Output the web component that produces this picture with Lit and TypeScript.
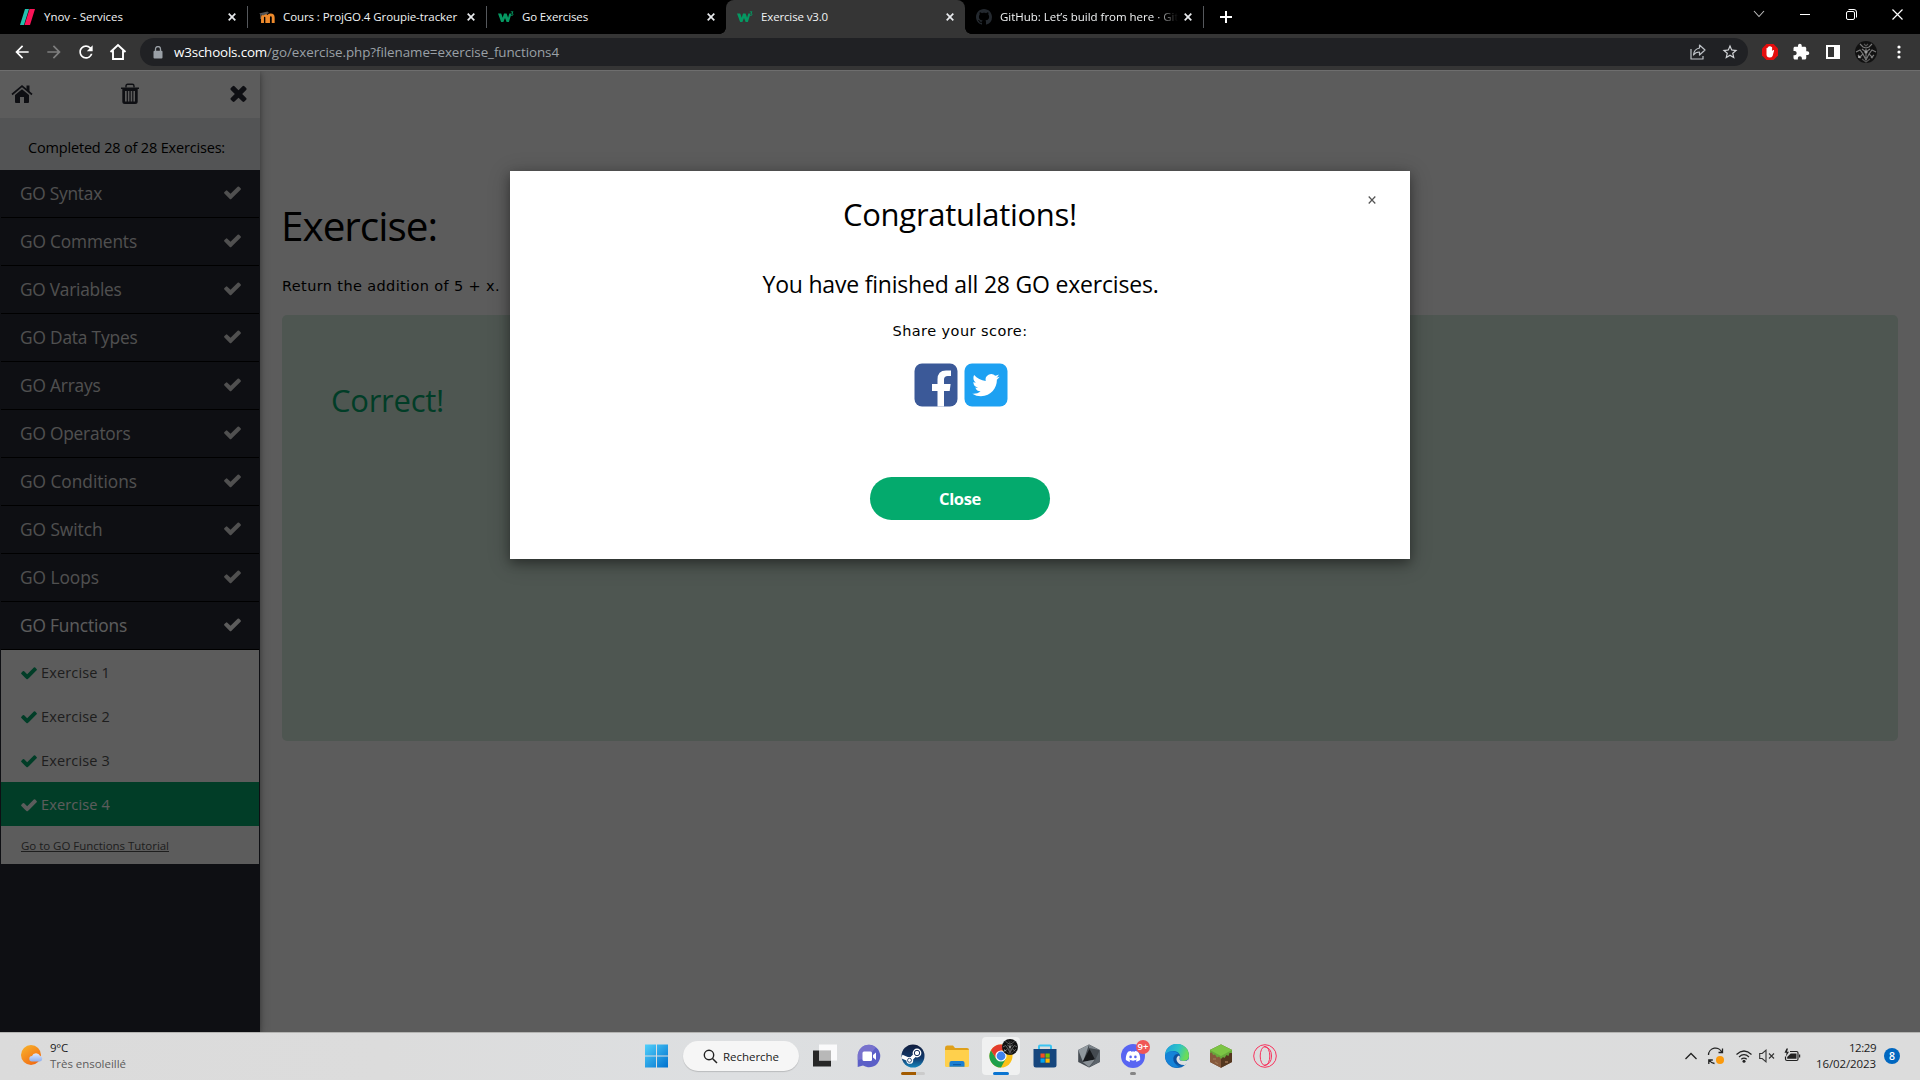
import { LitElement, html, svg, css } from "lit";
import { customElement, property } from "lit/decorators.js";

/** One line of text tracked so that it fills the given width in pixels. */
@customElement("fit-text")
class FitText extends LitElement {
  @property() text = "";
  @property({ type: Number }) w = 0;
  static styles = css`
    :host { display: inline-block; white-space: pre; }
    .line { display: inline-block; text-decoration: inherit; }
  `;
  render() {
    return html`<span class="line">${this.text}</span>`;
  }
  updated() {
    const line = this.renderRoot.querySelector(".line") as HTMLElement;
    if (!this.w || !line) return;
    line.style.letterSpacing = "0px";
    const natural = line.getBoundingClientRect().width;
    line.style.letterSpacing = `${(this.w - natural) / this.text.length}px`;
  }
}

const t = (text: string, w: number) => html`<fit-text .text=${text} .w=${w}></fit-text>`;

const CHECK = svg`<path fill="currentColor" d="M1671 566q0 40-28 68l-724 724-136 136q-28 28-68 28t-68-28l-136-136-362-362q-28-28-28-68t28-68l136-136q28-28 68-28t68 28l294 295 656-657q28-28 68-28t68 28l136 136q28 28 28 68z"/>`;
const check = (size: number) => html`<svg class="ic" width=${size} height=${size} viewBox="110 110 1572 1572">${CHECK}</svg>`;
const w3 = html`<svg class="ic" width="17" height="16" viewBox="0 0 17 16"><path d="M0 4.500h3.200l1.500 4.300 1.300-4.300h2.600l1.500 4.300 1.200-4.300h2.200l-2.600 8.500H8.600L7 9l-1.600 4H3.100z" fill="#059862"/><path d="M12.800 2.800h2.300l-1.300 1.500q1.600.2 1.200 1.500-.6 1-2.200.4" fill="none" stroke="#059862" stroke-width=".9"/></svg>`;
const closeX = html`<svg class="ic" width="8" height="8" viewBox="0 0 8 8"><path d="M.7.7 7.3 7.3M7.3.7.7 7.3" stroke="#e8eaed" stroke-width="1.700"/></svg>`;
const avatar = (s: number) => html`<svg class="ic" width=${s} height=${s} viewBox="0 0 22 22">
  <circle cx="11" cy="11" r="11" fill="#111"/>
  <g fill="none" stroke="#7c7c7c" stroke-width="1.100"><path d="M5 3l3 3 3 1 3-1 3-3M7 8l4 3 4-3M1 11l4-2 3 4-4 4M21 11l-4-2-3 4 4 4M11 8v9M8 13l3 6 3-6M3 14l3 3M19 14l-3 3"/><path d="M9 3l2 2 2-2M7 18l4 3 4-3" stroke="#555"/></g>
  <circle cx="11" cy="11" r="1.600" fill="#999"/><circle cx="4" cy="16" r="1" fill="#bbb"/></svg>`;

@customElement("browser-tabs")
class BrowserTabs extends LitElement {
  static styles = css`
    :host { display: flex; height: 34px; background: #000; padding-left: 9px; font-family: "Open Sans", sans-serif; font-size: 11.500px; color: #f1f3f4; }
    .ic { display: block; flex: none; }
    .tab { box-sizing: border-box; width: 239px; height: 34px; display: flex; align-items: center; padding: 0 11px 0 11px; position: relative; }
    .tab.line { border-right: 1px solid transparent; border-image: linear-gradient(#000 7px, #55585c 7px, #55585c 27px, #000 27px) 1; }
    .tab.active { background: #353535; border-radius: 8px 8px 0 0; }
    .tab.active::before, .tab.active::after { content: ""; position: absolute; bottom: 0; width: 6px; height: 6px; }
    .tab.active::before { left: -6px; background: radial-gradient(circle at 0 0, transparent 5.500px, #353535 6px); }
    .tab.active::after { right: -6px; background: radial-gradient(circle at 100% 0, transparent 5.500px, #353535 6px); }
    .fav { width: 16px; margin-right: 8px; flex: none; }
    .fade { -webkit-mask-image: linear-gradient(90deg, #000 155px, transparent 178px); overflow: hidden; width: 178px; }
    .label { flex: 1; min-width: 0; line-height: 18px; padding-bottom: 1px; white-space: nowrap; }
    .plus { align-self: center; margin-left: 16px; }
    .win { margin-left: auto; display: flex; height: 28px; align-items: center; }
    .win span { width: 46px; display: flex; justify-content: center; }
  `;
  render() {
    const tab = (icon: unknown, text: unknown, cls = "") =>
      html`<div class="tab ${cls}"><span class="fav">${icon}</span><span class="label">${text}</span>${closeX}</div>`;
    return html`
      ${tab(html`<svg class="ic" width="16" height="16" viewBox="0 0 16 16"><path d="M5 0h4L4 16H0z" fill="#22c0ae"/><path d="M9.500 0h5.500L10 16H4.500z" fill="#fa1458"/></svg>`, t("Ynov - Services", 79), "line")}
      ${tab(html`<svg class="ic" width="17" height="16" viewBox="0 0 17 16"><path d="M3.500 14V8.500q0-2.300 2.100-2.300 2.200 0 2.200 2.300V14M9.500 14V8.500q0-2.600 2.200-2.600 2.500 0 2.500 2.600V14" fill="none" stroke="#ee8a2c" stroke-width="2.900"/><path d="M0 4.500 8.500 2.500 10 4 4 6.500z" fill="#555"/><path d="M1.500 5v5" stroke="#555" stroke-width=".8"/></svg>`, t("Cours : ProjGO.4 Groupie-tracker", 174), "line")}
      ${tab(w3, t("Go Exercises", 66))}
      ${tab(w3, t("Exercise v3.0", 67), "active")}
      ${tab(html`<svg class="ic" width="16" height="16" viewBox="0 0 16 16"><path fill="#24292f" d="M8 0C3.580 0 0 3.580 0 8c0 3.540 2.290 6.530 5.470 7.590.4.070.550-.170.550-.380 0-.190-.010-.820-.010-1.490-2.010.370-2.530-.490-2.690-.940-.090-.230-.480-.940-.820-1.130-.280-.150-.680-.520-.010-.530.630-.010 1.080.580 1.230.820.720 1.210 1.870.870 2.330.660.070-.520.280-.870.510-1.070-1.780-.2-3.640-.890-3.640-3.950 0-.870.310-1.590.820-2.150-.080-.2-.360-1.020.080-2.120 0 0 .670-.210 2.200.820.640-.180 1.320-.270 2-.270s1.360.090 2 .270c1.530-1.040 2.200-.820 2.200-.820.440 1.100.160 1.920.080 2.120.510.560.820 1.270.820 2.150 0 3.070-1.870 3.750-3.650 3.950.290.250.540.730.540 1.480 0 1.070-.010 1.930-.010 2.200 0 .210.150.460.550.380A8.010 8.010 0 0016 8c0-4.420-3.580-8-8-8z"/></svg>`, html`<div class="fade">${t("GitHub: Let’s build from here · GitHub", 201)}</div>`, "line")}
      <svg class="ic plus" width="12" height="12" viewBox="0 0 12 12"><path d="M6 0v12M0 6h12" stroke="#fff" stroke-width="2"/></svg>
      <div class="win">
        <span><svg class="ic" width="12" height="8" viewBox="0 0 12 8"><path d="M1 1l5 5.500L11 1" fill="none" stroke="#bbb" stroke-width="1.100"/></svg></span>
        <span><svg class="ic" width="10" height="10" viewBox="0 0 10 10"><path d="M0 5.500h10" stroke="#fff"/></svg></span>
        <span><svg class="ic" width="11" height="11" viewBox="0 0 11 11"><rect x=".5" y="2.500" width="8" height="8" rx="1.500" fill="none" stroke="#fff"/><path d="M2.500.500H8q2.500 0 2.500 2.500v5.500" fill="none" stroke="#fff"/></svg></span>
        <span><svg class="ic" width="11" height="11" viewBox="0 0 11 11"><path d="M.5.500l10 10M10.500.500l-10 10" stroke="#fff" stroke-width="1.200"/></svg></span>
      </div>`;
  }
}

@customElement("browser-toolbar")
class BrowserToolbar extends LitElement {
  static styles = css`
    :host { box-sizing: border-box; display: flex; align-items: center; height: 36px; background: #353535; padding: 0 11px 0 12px; font-family: "Open Sans", sans-serif; }
    .ic { display: block; flex: none; }
    .nav { display: flex; gap: 12px; width: 128px; flex: none; }
    .url { flex: 1; height: 28px; border-radius: 14px; background: #202124; display: flex; align-items: center; padding: 0 9px 0 13px; font-size: 13.400px; line-height: 20px; color: #9aa0a6; }
    .url .host { color: #fff; margin-left: 11px; }
    .url .acts { margin-left: auto; display: flex; gap: 14px; }
    .ext { display: flex; align-items: center; gap: 12px; margin-left: 12px; }
    .panel { margin-left: 1px; }
  `;
  render() {
    const m = (d: string, fill = "#fff", s = 20) => html`<svg class="ic" width=${s} height=${s} viewBox="0 0 24 24"><path d=${d} fill=${fill} /></svg>`;
    const back = "M20 11H7.830l5.590-5.590L12 4l-8 8 8 8 1.410-1.410L7.830 13H20v-2z";
    return html`
      <div class="nav">
        ${m(back)}
        <svg class="ic" width="20" height="20" viewBox="0 0 24 24"><g transform="rotate(180 12 12)"><path d=${back} fill="#7e7e7e"/></g></svg>
        ${m("M17.650 6.350A7.958 7.958 0 0012 4c-4.420 0-7.990 3.580-7.990 8s3.570 8 7.990 8c3.730 0 6.840-2.550 7.730-6h-2.080A5.990 5.990 0 0112 18c-3.310 0-6-2.690-6-6s2.690-6 6-6c1.660 0 3.140.690 4.220 1.780L13 11h7V4l-2.350 2.350z")}
        <svg class="ic" width="20" height="20" viewBox="0 0 20 20"><path d="M2.500 10 10 3l7.500 7M5 8.500V17h10V8.500" fill="none" stroke="#fff" stroke-width="1.900"/></svg>
      </div>
      <div class="url">
        <svg class="ic" width="10" height="13" viewBox="0 0 10 13"><path d="M2.500 5V3a2.500 2.500 0 015 0v2" fill="none" stroke="#9aa0a6" stroke-width="1.300"/><rect x=".5" y="4.700" width="9" height="7.800" rx="1" fill="#9aa0a6"/></svg>
        <span class="host">${t("w3schools.com", 93)}</span>${t("/go/exercise.php?filename=exercise_functions4", 292)}
        <div class="acts">
          <svg class="ic" width="18" height="18" viewBox="0 0 18 18"><path d="M2 6v10h12v-3M10.500 5V2l5.500 5-5.500 5V9q-4 0-6 3 .5-6 6-7z" fill="none" stroke="#bdc1c6" stroke-width="1.200" stroke-linejoin="round"/></svg>
          ${m("M22 9.240l-7.190-.620L12 2 9.190 8.630 2 9.240l5.460 4.730L5.820 21 12 17.270 18.180 21l-1.630-7.030L22 9.240zM12 15.400l-3.760 2.270 1-4.280-3.320-2.880 4.380-.380L12 6.100l1.710 4.040 4.380.380-3.320 2.880 1 4.280L12 15.400z", "#d2d4d7", 18)}
        </div>
      </div>
      <div class="ext">
        <svg class="ic" width="20" height="20" viewBox="0 0 20 20"><path d="M6.500 2h7L18 6.500v7L13.500 18h-7L2 13.500v-7z" fill="#e40d0d"/><path d="M6.500 10.500V6.200q.7-.8 1.300 0V5q.7-.9 1.400 0V4.300q.8-.8 1.500 0V5q.8-.7 1.400.2V9l1-1q1-.3 1 .6L12.600 14q-.8 1.600-3 1.600-3 0-3.100-3z" fill="#fff"/></svg>
        ${m("M20.500 11H19V7c0-1.100-.9-2-2-2h-4V3.500C13 2.120 11.880 1 10.500 1S8 2.120 8 3.500V5H4c-1.100 0-1.990.9-1.990 2v3.800H3.500c1.490 0 2.700 1.210 2.700 2.700s-1.210 2.700-2.700 2.700H2V20c0 1.100.9 2 2 2h3.800v-1.500c0-1.490 1.210-2.700 2.700-2.700 1.490 0 2.700 1.210 2.700 2.700V22H17c1.100 0 2-.9 2-2v-4h1.500c1.380 0 2.500-1.120 2.500-2.500S21.880 11 20.500 11z", "#fff", 18)}
        <svg class="ic panel" width="20" height="16" viewBox="0 0 20 16"><path fill="#fff" fill-rule="evenodd" d="M3 1h14v14H3zM5 3v10h6V3z"/></svg>
        ${avatar(22)}
        <svg class="ic" width="20" height="16" viewBox="0 0 20 16"><g fill="#fff"><circle cx="10" cy="3" r="1.600"/><circle cx="10" cy="8" r="1.600"/><circle cx="10" cy="13" r="1.600"/></g></svg>
      </div>`;
  }
}

@customElement("exercise-menu")
class ExerciseMenu extends LitElement {
  static styles = css`
    :host { display: flex; flex-direction: column; width: 260px; flex: none; background: #282a35; font-family: "Open Sans", sans-serif; box-shadow: 0 2px 5px rgba(0,0,0,.3), 0 2px 12px rgba(0,0,0,.24); }
    .ic { display: block; flex: none; }
    .bar { height: 47px; box-sizing: border-box; background: #fff; display: flex; justify-content: space-between; align-items: center; padding: 0 13px 2px 11px; }
    .bar .bin { margin-right: 3px; }
    .done { height: 52px; box-sizing: border-box; padding: 18px 0 0 28px; background: #e7e9eb; font-size: 14.500px; line-height: 24px; color: #000; }
    .topic { height: 47px; margin: 0 1px; padding: 0 18px 0 19px; border-bottom: 1px solid #000; display: flex; justify-content: space-between; align-items: center; font-size: 17.300px; line-height: 24px; color: #ddd; }
    .topic .ic { margin-top: -2px; }
    .topic.open { color: #fff; }
    .sub { box-sizing: border-box; height: 44px; margin: 0 1px; padding: 1px 0 0 20px; background: #fff; display: flex; align-items: center; gap: 4px; font-size: 14.500px; line-height: 22px; color: #555; }
    .sub .ic { color: #04aa6d; }
    .sub.now { background: #04aa6d; color: #fff; }
    .sub.now .ic { color: #fff; }
    .link { box-sizing: border-box; height: 38px; margin: 0 1px; padding: 1px 0 0 20px; background: #fff; display: flex; align-items: center; font-size: 11.500px; line-height: 18px; color: #555; }
    .link fit-text { text-decoration: underline; }
  `;
  render() {
    const topics: [string, number][] = [["GO Syntax", 82], ["GO Comments", 117], ["GO Variables", 101.5], ["GO Data Types", 117.5], ["GO Arrays", 80.5], ["GO Operators", 110.5], ["GO Conditions", 117], ["GO Switch", 82.5], ["GO Loops", 79], ["GO Functions", 107]];
    return html`
      <div class="bar">
        <svg class="ic" width="22" height="20" viewBox="0 0 22 20"><path d="M11 5.200 18 11v7q0 1-1 1h-4v-6H9v6H5q-1 0-1-1v-7z" fill="#282a35"/><path d="M1 10.500 11 2l10 8.500" fill="none" stroke="#282a35" stroke-width="1.700"/><path d="M15.500 1.500h3V8l-3-2.500z" fill="#282a35"/></svg>
        <svg class="ic bin" width="20" height="22" viewBox="0 0 20 22"><path d="M6 4.500V3q0-1.700 1.700-1.700h4.600Q14 1.300 14 3v1.500" fill="none" stroke="#282a35" stroke-width="1.400"/><path d="M1 4.500h18V6H1z" fill="#282a35"/><path fill="#282a35" fill-rule="evenodd" d="M2.300 6h15.400v12.500q0 2.500-2.500 2.500H4.800q-2.500 0-2.500-2.500zM5 8v10.500h1.700V8zm2.900 0v10.500h1.500V8zm2.800 0v10.500h1.500V8zm2.700 0v10.500H15V8z"/></svg>
        <svg class="ic" width="17" height="17" viewBox="300 302 1190 1252"><path fill="#282a35" d="M1490 1322q0 40-28 68l-136 136q-28 28-68 28t-68-28l-294-294-294 294q-28 28-68 28t-68-28l-136-136q-28-28-28-68t28-68l294-294-294-294q-28-28-28-68t28-68l136-136q28-28 68-28t68 28l294 294 294-294q28-28 68-28t68 28l136 136q28 28 28 68t-28 68l-294 294 294 294q28 28 28 68z"/></svg>
      </div>
      <div class="done">${t("Completed 28 of 28 Exercises:", 197)}</div>
      ${topics.map(([n, w], i) => html`<div class="topic ${i === 9 ? "open" : ""}">${t(n, w)}${check(17)}</div>`)}
      ${[1, 2, 3, 4].map((n) => html`<div class="sub ${n === 4 ? "now" : ""}">${check(16)}${t(`Exercise ${n}`, 69)}</div>`)}
      <div class="link">${t("Go to GO Functions Tutorial", 148)}</div>`;
  }
}

@customElement("score-dialog")
class ScoreDialog extends LitElement {
  static styles = css`
    :host { position: absolute; inset: 0; display: flex; justify-content: center; align-items: flex-start; padding-top: 100px; background: rgba(0,0,0,.64); font-family: "Open Sans", sans-serif; color: #000; }
    .ic { display: block; }
    .card { box-sizing: border-box; width: 900px; height: 388px; background: #fff; display: flex; flex-direction: column; align-items: center; position: relative; box-shadow: 0 4px 10px rgba(0,0,0,.3), 0 4px 20px rgba(0,0,0,.28); }
    .x { position: absolute; top: 25px; right: 34px; }
    .title { margin-top: 19px; height: 48px; line-height: 48px; font-size: 31px; }
    .msg { margin-top: 29px; height: 34px; line-height: 34px; font-size: 23px; padding-left: 1px; }
    .share { margin-top: 18px; height: 24px; font: 14.500px/24px "DejaVu Sans", sans-serif; }
    .icons { margin-top: 20px; margin-left: 1px; display: flex; gap: 6px; }
    .btn { margin-top: 70px; width: 180px; height: 43px; border-radius: 22px; background: #04aa6d; color: #fff; display: flex; justify-content: center; align-items: center; font-size: 16.500px; font-weight: 700; line-height: 24px; }
  `;
  render() {
    return html`<div class="card">
      <svg class="ic x" width="8" height="8" viewBox="0 0 8 8"><path d="M.7.500 7.300 7.500M7.300.500.700 7.500" stroke="#555" stroke-width="1.200"/></svg>
      <div class="title">${t("Congratulations!", 234)}</div>
      <div class="msg">${t("You have finished all 28 GO exercises.", 396)}</div>
      <div class="share">${t("Share your score:", 135)}</div>
      <div class="icons">
        <svg class="ic" width="44" height="44" viewBox="0 0 44 44"><rect x=".5" y=".5" width="43" height="43" rx="7.500" fill="#3b5998"/><path d="M23.500 43.500V28H18v-7h5.500v-4.500q0-9 8.500-9h5V13h-3.200q-3.800 0-3.800 3.600V21h6.600l-.9 7H30v15.500z" fill="#fff"/></svg>
        <svg class="ic" width="44" height="44" viewBox="0 0 44 44"><rect x=".5" y=".5" width="43" height="43" rx="7.500" fill="#1da1f2"/><g transform="translate(8.300 8.500) scale(1.140)"><path fill="#fff" d="M23.953 4.570a10 10 0 01-2.825.775 4.958 4.958 0 002.163-2.723c-.951.555-2.005.959-3.127 1.184a4.920 4.920 0 00-8.384 4.482C7.690 8.095 4.067 6.130 1.640 3.162a4.822 4.822 0 00-.666 2.475c0 1.710.870 3.213 2.188 4.096a4.904 4.904 0 01-2.228-.616v.060a4.923 4.923 0 003.946 4.827 4.996 4.996 0 01-2.212.085 4.936 4.936 0 004.604 3.417 9.867 9.867 0 01-6.102 2.105c-.390 0-.779-.023-1.170-.067a13.995 13.995 0 007.557 2.209c9.053 0 13.998-7.496 13.998-13.985 0-.210 0-.420-.015-.630A9.935 9.935 0 0024 4.590z"/></g></svg>
      </div>
      <div class="btn">${t("Close", 42)}</div>
    </div>`;
  }
}

@customElement("task-bar")
class TaskBar extends LitElement {
  static styles = css`
    :host { box-sizing: border-box; display: grid; grid-template-columns: 645px 1fr 300px; height: 48px; background: linear-gradient(90deg, #dbdbdb, #dcdcdc 20%, #dddfe1 38%, #dcddde 60%, #dcdcdc); border-top: 1px solid #b4b4b2; padding-bottom: 1px; font-family: "Open Sans", sans-serif; font-size: 11.500px; color: #1b1b1b; }
    .ic { display: block; flex: none; }
    .weather { display: flex; align-items: center; padding-left: 20px; gap: 6px; }
    .two { display: flex; flex-direction: column; line-height: 16px; }
    .weather .two { padding-bottom: 1px; }
    .weather .ic { margin-top: -2px; }
    .dim { color: #5c5c5c; }
    .apps { display: flex; align-items: center; }
    .search { box-sizing: border-box; margin: 0 14px 0 14px; width: 116px; height: 30px; border-radius: 15px; background: #f6f6f6; box-shadow: 0 1px 1px rgba(0,0,0,.16); display: flex; align-items: center; padding-left: 20px; gap: 5px; }
    .app { width: 24px; height: 38px; margin-right: 20px; display: flex; align-items: center; justify-content: center; position: relative; flex: none; }
    .hot { width: 38px; margin: 0 13px 0 -7px; background: #f0f1f1; border-radius: 4px; }
    .mark { position: absolute; bottom: 0; left: 50%; height: 3px; border-radius: 2px; transform: translateX(-50%); }
    .blue { width: 16px; background: #0a74d1; }
    .grey { width: 6px; background: #858585; }
    .steam { width: 24px; background: linear-gradient(90deg, #a35b00 62%, #cbcbcb 62%); }
    .pic { position: absolute; top: 2px; right: 2px; }
    .badge { position: absolute; top: 3px; right: -5px; width: 14px; height: 14px; border-radius: 50%; background: #f05656; color: #fff; font-size: 9.500px; font-weight: 600; line-height: 13px; text-align: center; }
    .tray { display: flex; align-items: center; justify-content: flex-end; padding-right: 20px; }
    .tray .two { align-items: flex-end; margin-right: 8px; }
    .count { width: 16px; height: 16px; border-radius: 50%; background: #0067c0; color: #fff; font-size: 10.500px; font-weight: 600; line-height: 16px; text-align: center; }
    .g6 { margin-right: 6px; }
    .g8 { margin-right: 8px; }
    .g10 { margin-right: 10px; }
    .g15 { margin-right: 15px; }
  `;
  render() {
    const app = (pic: unknown, extra: unknown = "", cls = "") => html`<div class="app ${cls}"><svg class="ic" width="24" height="24" viewBox="0 0 24 24">${pic}</svg>${extra}</div>`;
    return html`
      <div class="weather">
        <svg class="ic" width="24" height="24" viewBox="0 0 24 24"><defs><linearGradient id="sun" x1="0" y1="0" x2=".7" y2="1"><stop offset="0" stop-color="#f8b62c"/><stop offset="1" stop-color="#f26a12"/></linearGradient><linearGradient id="cl" x1="0" y1="0" x2="0" y2="1"><stop offset="0" stop-color="#dfe9fb"/><stop offset="1" stop-color="#8fb0ee"/></linearGradient></defs><circle cx="11" cy="12" r="10" fill="url(#sun)"/><path d="M12 18.500a2.700 2.700 0 010-5.400 4.300 4.300 0 018-.3 2.900 2.900 0 01-.2 5.700z" fill="url(#cl)"/></svg>
        <div class="two">${t("9°C", 18)}<span class="dim">${t("Très ensoleillé", 76)}</span></div>
      </div>
      <div class="apps">
        <svg class="ic" width="24" height="24" viewBox="0 0 24 24"><defs><linearGradient id="win" x1="0" y1="0" x2="1" y2="1"><stop offset="0" stop-color="#50d0fb"/><stop offset="1" stop-color="#0070ce"/></linearGradient></defs><path d="M0 .500h11v11H0zM12 .500h11v11H12zM0 12.500h11v11H0zM12 12.500h11v11H12z" fill="url(#win)"/></svg>
        <div class="search"><svg class="ic" width="15" height="15" viewBox="0 0 15 15"><circle cx="6" cy="6" r="4.700" fill="none" stroke="#222" stroke-width="1.400"/><path d="M9.500 9.500 14 14" stroke="#222" stroke-width="1.500"/></svg>${t("Recherche", 56)}</div>
        ${app(svg`<path d="M0 6.500h18v16H0z" fill="#272727"/><path d="M6 .500h18v16H6z" fill="#fff" opacity=".85"/><path d="M6 6.500h12v10H6z" fill="#b8b8b8"/>`)}
        ${app(svg`<path d="M12 .700a11.300 11.300 0 11-6 20.900L.700 23V12A11.300 11.300 0 0112 .700z" fill="#5b5fc7"/><path d="M12 .700A11.300 11.300 0 00.700 12v4Q10 16 19 3.200 16 .700 12 .700z" fill="#8278cf" opacity=".75"/><rect x="5.500" y="7.500" width="9.500" height="9.500" rx="1.500" fill="#fff"/><path d="M16 11l3-2.500v7.500l-3-2.500z" fill="#fff"/>`)}
        ${app(svg`<defs><linearGradient id="st" x1="0" y1="0" x2="0" y2="1"><stop offset="0" stop-color="#101c3c"/><stop offset=".6" stop-color="#123a6d"/><stop offset="1" stop-color="#1686bd"/></linearGradient></defs><circle cx="12" cy="12" r="11.500" fill="url(#st)"/><path d="M.800 12.500 9 16l7-7" fill="none" stroke="#fff" stroke-width="3.600"/><circle cx="16" cy="9" r="4.400" fill="#fff"/><circle cx="16" cy="9" r="2.700" fill="none" stroke="#17305c" stroke-width="1"/><circle cx="8.800" cy="16.400" r="3.400" fill="#fff"/><circle cx="8.500" cy="16.300" r="2" fill="none" stroke="#17305c" stroke-width=".8"/>`, html`<span class="mark steam"></span>`)}
        ${app(svg`<path d="M0 4q0-2.500 2-2.500h6L10 4h12q2 0 2 2v5H0z" fill="#dfa01a"/><path d="M0 6h24v15.500q0 1.500-1.500 1.500h-21Q0 23 0 21.500z" fill="#ffd04c"/><path d="M4.500 22.800V19q0-2 2-2h11q2 0 2 2v3.800z" fill="#1b7fd2"/><path d="M8 20h8v1.200H8z" fill="#0b5ca6"/>`)}
        ${app(svg`<circle cx="12" cy="12" r="11.500" fill="#fbc116"/><path d="M2 6.200A11.500 11.500 0 0012 23.500L16.800 14.800 12 12 7.200 14.800z" fill="#1fa04b"/><path d="M2 6.200 7.200 14.800 12 8V6.500L22 6.500A11.500 11.500 0 002 6.200z" fill="#e33b2e"/><circle cx="12" cy="12" r="5.600" fill="#fff"/><circle cx="12" cy="12" r="4.400" fill="#4083ee"/>`, html`<span class="pic">${avatar(16)}</span><span class="mark blue"></span>`, "hot")}
        ${app(svg`<path d="M6 5.500V2.500q0-1 1-1h10q1 0 1 1v3" fill="none" stroke="#3cc4f2" stroke-width="2"/><path d="M.500 5h23v16q0 2.500-2.500 2.500H3Q.500 23.500.500 21z" fill="#16467d"/><path d="M7.500 9.500h4.200v4.200H7.500z" fill="#f25022"/><path d="M12.500 9.500h4.200v4.200h-4.200z" fill="#7fba00"/><path d="M7.500 14.500h4.200v4.200H7.500z" fill="#00a4ef"/><path d="M12.500 14.500h4.200v4.200h-4.200z" fill="#ffb900"/>`)}
        ${app(svg`<path d="M12 .500 22.800 6v12L12 23.500 1.200 18V6z" fill="#444a50"/><path d="M12 .500 22.800 6 12 4z" fill="#7a8289"/><path d="M12 .500 1.200 6 6 18z" fill="#90989e"/><path d="M22.800 6v12L12 23.500l6-7z" fill="#5c646b"/><path d="M12.500 5 18 15.500 5.500 18z" fill="#17191c"/><path d="M5.500 18 18 15.500 12 23z" fill="#888f95"/>`)}
        ${app(svg`<circle cx="12" cy="12" r="12" fill="#5865f2"/><g transform="translate(4.800 5.200) scale(.6)"><path fill="#fff" d="M20.317 4.370a19.790 19.790 0 00-4.885-1.515c-.240.400-.520.900-.690 1.290-1.840-.280-3.680-.280-5.490 0-.160-.390-.410-.900-.690-1.290a19.740 19.740 0 00-4.890 1.520C.530 9.050-.320 13.580.100 18.060c2.060 1.510 4.040 2.430 6.020 3.080.510-.650.920-1.320 1.310-2.020-.650-.250-1.310-.600-1.910-.950l.450-.400c3.930 1.790 8.180 1.790 12.060 0l.460.380c-.590.350-1.220.650-1.880.900.360.700.770 1.360 1.260 2.040 1.960-.610 3.950-1.520 6.030-3.030.500-5.180-.840-9.670-3.583-13.690z"/><ellipse cx="8" cy="12.800" rx="2.150" ry="2.400" fill="#5865f2"/><ellipse cx="16" cy="12.800" rx="2.150" ry="2.400" fill="#5865f2"/></g>`, html`<span class="badge">9+</span><span class="mark grey"></span>`)}
        ${app(svg`<defs><linearGradient id="ed" x1="0" y1="0" x2="1" y2=".3"><stop offset="0" stop-color="#1c9de0"/><stop offset=".6" stop-color="#2ec4c5"/><stop offset="1" stop-color="#6bdc58"/></linearGradient></defs><circle cx="12" cy="12" r="12" fill="#0f66b5"/><path d="M0 11.500A12 12 0 0124 12q0 5-5.500 5-4.500 0-4-2.500 1.500-1.500 0-4.500Q12 6.500 7 7.200 1.500 8 0 11.500z" fill="url(#ed)"/><path d="M0 12Q2 7.300 7 7.200q4.500 0 6.500 3-4-.7-5 3.300-.8 6 5.500 9.800A12 12 0 010 12z" fill="#1583d8"/><path d="M14.500 14.500q-.5 2.500 4 2.500 3 0 4.500-1.200Q20 22 14 21q-6-1.500-5.500-7 .9-4 5-3.800 2.300 2 1 4.300z" fill="#0d4f9c"/><path d="M14.500 14.500q-.5 2.500 4 2.500 3.500 0 5-1.600l.5 2.600-4 3q-7 .5-8.500-5-.3-3.500 2.500-4.500 1.500 1.200.5 3z" fill="#dddfe0"/>`)}
        ${app(svg`<path d="M12 .500 23 6v12l-11 5.700L1 18V6z" fill="#6e4a32"/><path d="M12 12.500V23.700L1 18V6z" fill="#86593c"/><path d="M12 12.500V23.700L23 18V6z" fill="#54371f"/><path d="M12 .500 23 6v3l-2.500 0-1 3-2-1-2 3-1.500-1-2 2-2-2.500-2 1-2-3-2 .5-1-2.500L1 9V6z" fill="#68a83b"/><path d="M12 .500 23 6 12 12 1 6z" fill="#7cc545"/><path d="M4 15h3M16 18h3M6 18l3 2" stroke="#9c7352" stroke-width="1.500"/>`)}
        ${app(svg`<g fill="none" stroke="#f8335d" stroke-width="1"><circle cx="12" cy="12" r="11.300"/><ellipse cx="12" cy="12" rx="4.800" ry="9.500"/><path d="M11 2.600q7.500 1 7.500 9.400t-7.500 9.400"/></g>`)}
      </div>
      <div class="tray">
        <svg class="ic g8" width="16" height="16" viewBox="0 0 16 16"><path d="M2.500 11 8 5.500l5.500 5.500" fill="none" stroke="#222" stroke-width="1.300"/></svg>
        <svg class="ic g10" width="18" height="18" viewBox="0 0 18 18"><path d="M1.500 8A7 7 0 0115 5.500M15.500 1.500v4h-4M1.800 17v-4h4M2 13q2 3 5.500 3.500" fill="none" stroke="#222" stroke-width="1.300"/><circle cx="13" cy="13" r="4" fill="#fb9a0c"/></svg>
        <svg class="ic g6" width="18" height="16" viewBox="0 0 18 16"><g fill="none" stroke="#222" stroke-width="1.200"><path d="M1.500 6.500q7.500-7 15 0M4 9q5-4.600 10 0M6.300 11.300q2.700-2.400 5.400 0"/></g><circle cx="9" cy="13.300" r="1.500" fill="#222"/></svg>
        <svg class="ic g8" width="16" height="14" viewBox="0 0 16 14"><path d="M.7 4.500h2.500L7 1.200v11.600L3.200 9.500H.7z" fill="none" stroke="#333" stroke-width="1.100"/><path d="M10 4.500l5 5M15 4.500l-5 5" stroke="#333" stroke-width="1.100"/></svg>
        <svg class="ic g15" width="18" height="16" viewBox="0 0 18 16"><path d="M7 3.500h6.500q1.500 0 1.500 1.500v6q0 1.500-1.500 1.500H4q-1.500 0-1.500-1.500V8.500" fill="none" stroke="#222" stroke-width="1.200"/><path d="M16 6.500h1.200v3H16z" fill="#222"/><path d="M4.200 10.800V9l3.500-3.500H13.500v5.300z" fill="#222"/><path d="M3.500.500 1.500 4.800h2L3 8.500l3-4.700H4L5 .500z" fill="#222"/></svg>
        <div class="two">${t("12:29", 27)}${t("16/02/2023", 60)}</div>
        <span class="count">8</span>
      </div>`;
  }
}

@customElement("app-root")
class AppRoot extends LitElement {
  static styles = css`
    :host { display: flex; flex-direction: column; width: 1920px; height: 1080px; overflow: hidden; background: #000; }
    .page { flex: 1; display: flex; position: relative; overflow: hidden; background: #fff; }
    .seam { height: 1px; background: #6e6e6e; }
    .main { flex: 1; padding: 125px 22px 0; font-family: "Open Sans", sans-serif; color: #000; }
    .head { height: 60px; line-height: 60px; font-size: 40.500px; margin-left: -1px; }
    .task { margin-top: 18px; font: 14.500px/24px "DejaVu Sans", sans-serif; }
    .result { box-sizing: border-box; margin-top: 17px; height: 426px; border-radius: 5px; background: #d9eee1; padding: 61px 49px; color: #04aa6d; font-size: 31px; line-height: 48px; }
  `;
  render() {
    return html`
      <browser-tabs></browser-tabs>
      <browser-toolbar></browser-toolbar>
      <div class="seam"></div>
      <div class="page">
        <exercise-menu></exercise-menu>
        <div class="main">
          <div class="head">${t("Exercise:", 156)}</div>
          <div class="task">${t("Return the addition of 5 + x.", 218)}</div>
          <div class="result">${t("Correct!", 113)}</div>
        </div>
        <score-dialog></score-dialog>
      </div>
      <task-bar></task-bar>`;
  }
}
